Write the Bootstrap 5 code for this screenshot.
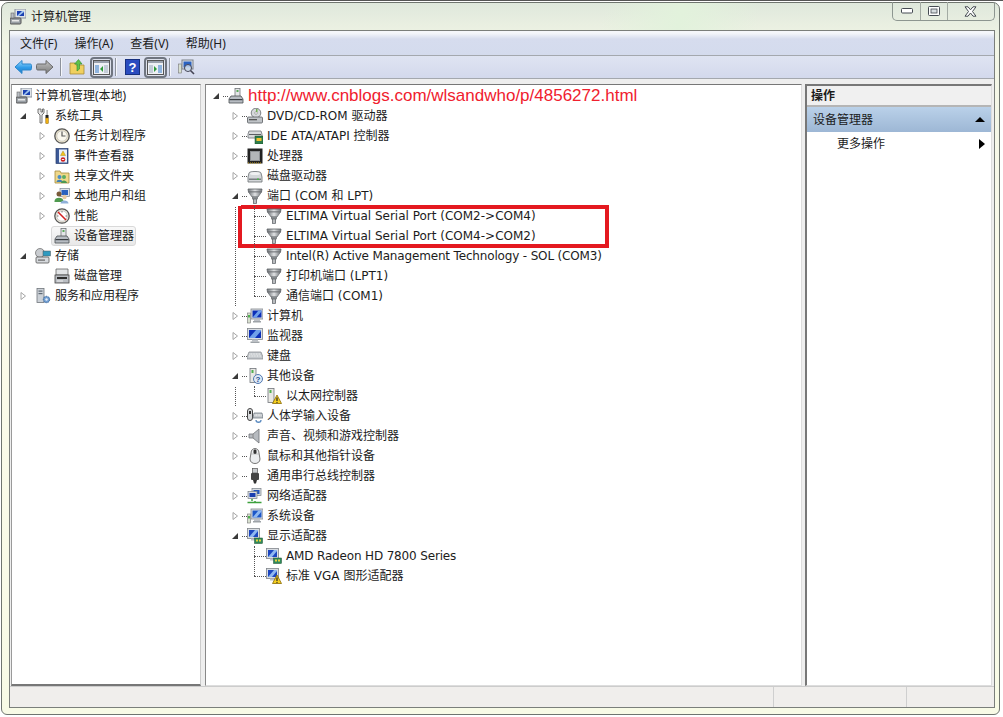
<!DOCTYPE html>
<html lang="zh">
<head>
<meta charset="utf-8">
<title>计算机管理</title>
<link href="https://cdn.jsdelivr.net/npm/bootstrap@5.3.0/dist/css/bootstrap.min.css" rel="stylesheet">
<style>
html,body{height:717px;overflow:hidden;background:#fff;}
body{font-family:"Noto Sans","Noto Sans CJK SC",sans-serif;font-size:12px;line-height:20px;color:#1c1c1c;}
.defs{display:block;width:0;height:0;}
.desk{height:717px;padding:1px 3px 2px 1px;border-top:1px solid #555;}
.frame{height:100%;border:1px solid #6f756f;border-radius:7px 7px 6px 6px;padding:0 4px 6px 7px;background:linear-gradient(180deg,#dfe8dc 0,#f3f6e6 6%,#fbfbea 40%,#f8fbe6 100%);}
.capbar{height:27px;background:linear-gradient(100deg,transparent 0,transparent 60%,#e2f2dc 68%,transparent 76%);}
.capt{padding-left:1px;gap:5px;padding-top:4px;}
.wbtns{height:19px;width:103px;margin-top:-1px;border:1px solid #8d9690;border-top:0;border-radius:0 0 5px 5px;}
.wb{border-left:1px solid #a3aba3;height:100%;}
.wb:first-child{border-left:0;}
.wb1{width:28px}.wb2{width:27px}.wb3{width:48px}
.client{border:1px solid #7b7f7b;background:#eee;height:calc(100% - 27px);}
.menubar{height:25px;padding:2px 0 0 10px;background:linear-gradient(#f5f7fb 0,#f5f7fb 2px,#d6dcee 8px,#d4dbed 100%);border-bottom:1px solid #a4a8ae;gap:17px;}
.mi{white-space:nowrap;}
.toolsbar{height:23px;padding-left:4px;background:linear-gradient(#dfe4f2,#d3d9ec);border-bottom:1px solid #a4a8ae;}
.tsep{width:1px;height:18px;background:#8d929c;box-shadow:1px 0 0 #f4f6fb;}
.tbn{width:23px;height:21px;border:2px solid #6f7580;border-radius:4px;background:#dde1ec;}
.t2{margin-left:2px}.t4{margin-left:4px}.t5{margin-left:5px}.t6{margin-left:6px}.t8{margin-left:8px}.t9{margin-left:9px}
.panes{min-height:0;padding:5px 2px 0 1px;gap:4px;background:#eeeeee;}
.pane{background:#fff;border:1px solid #9a9a9a;overflow:hidden;}
.pl{width:190px;flex:none;border-top-color:#777;border-right-color:#ccc;border-bottom:2px solid #777;}
.pm{width:597px;flex:none;border-top-color:#777;border-left-color:#888;border-right-color:#ddd;border-bottom-color:#ddd;}
.pr{flex:1 1 auto;margin-left:-1px;border-left:2px solid #777;border-top:2px solid #777;border-bottom-color:#ddd;border-right-color:#ddd;}
.stbar{height:21px;flex:none;background:#f0eeec;border-top:1px solid #ccc;}
.scell{border-left:1px solid #cfcfcf;height:100%;}
.sc1{width:133px}.sc2{width:88px}
.nd{height:20px;white-space:nowrap;position:relative;}
.xp{width:11px;height:20px;flex:none;display:flex;align-items:center;justify-content:center;position:relative;z-index:1;}
.ic{width:16px;height:16px;flex:none;margin:0 2px 0 6px;position:relative;z-index:1;}
.tx{line-height:20px;padding-left:2px;position:relative;z-index:1;}
.kids{margin-left:19px;position:relative;}
.mid .kids::before{content:"";position:absolute;left:5px;top:0;bottom:10px;border-left:1px dotted #555;}
.mid .kids.tail2::before{bottom:50px;}
.mid .nd::before{content:"";position:absolute;left:5px;top:10px;width:12px;border-top:1px dotted #555;}
.mid .xp:not(:empty){background:#fff;}
.rootnd .ic{margin:0 1px 0 0;}
.pick{position:absolute;left:14px;top:0;width:85px;height:20px;border:1px solid #d9d9d9;border-radius:3px;background:linear-gradient(#f8f8f8,#e8e8e8);}
.lft{padding:1px 0 0 6px;}
.rootnd{margin-left:-2px;}
.mid{padding:1px 0 0 5px;position:relative;}
.url{color:#f0202e;font-size:17px;font-family:"Liberation Sans",sans-serif;}
.lat{font-family:"DejaVu Sans",sans-serif;font-size:12px;}
.nar1{letter-spacing:-.16px;}
.nar2{letter-spacing:-.16px;}
.bx{position:absolute;left:32px;top:120px;width:371px;height:43px;border:4px solid #e41920;}
.acth{height:21px;background:#f0f0f0;border-bottom:2px solid #b5b5b5;padding-left:4px;font-weight:700;line-height:20px;}
.actg{height:25px;padding:0 6px 0 6px;background:linear-gradient(#bad1e9,#9db7d5);}
.acti{height:24px;padding:0 6px 0 30px;}
.up3{width:0;height:0;border:5px solid transparent;border-top:0;border-bottom:5px solid #000;}
.rt3{width:0;height:0;border:5px solid transparent;border-right:0;border-left:6px solid #000;}
</style>
</head>
<body>
<svg class="defs" xmlns="http://www.w3.org/2000/svg">
<defs>
<linearGradient id="gb" x1="0" y1="0" x2="0" y2="1"><stop offset="0" stop-color="#9fdcff"/><stop offset=".55" stop-color="#2f9be8"/><stop offset="1" stop-color="#1f7cc8"/></linearGradient>
<linearGradient id="gg" x1="0" y1="0" x2="0" y2="1"><stop offset="0" stop-color="#c4c4c4"/><stop offset="1" stop-color="#7a7a7a"/></linearGradient>
<linearGradient id="gp" x1="0" y1="0" x2="1" y2="0"><stop offset="0" stop-color="#70757a"/><stop offset=".5" stop-color="#dfe1e3"/><stop offset="1" stop-color="#70757a"/></linearGradient>
<symbol id="op" viewBox="0 0 11 20"><path d="M3 6.500v7l4.500-3.500z" fill="#fff" stroke="#a6a6a6"/></symbol>
<symbol id="cl" viewBox="0 0 11 20"><path d="M8 7v6H2z" fill="#3a3a3a"/></symbol>
<symbol id="mgmt" viewBox="0 0 16 16"><rect x="5" y="0" width="11" height="9" fill="#dfe3e8" stroke="#8a929c"/><rect x="7" y="2" width="7" height="5" fill="#1a3fb0"/><path d="M7 7l5-5h2v1L9 7z" fill="#9fc3ee"/><rect x="0" y="9" width="11" height="6" rx="1" fill="#9aa0a6" stroke="#555"/><rect x="2" y="11" width="7" height="1.500" fill="#e8e8e8"/><rect x="1" y="4" width="3" height="5" fill="#b9bec4" stroke="#666" stroke-width=".6"/></symbol>
<symbol id="tools" viewBox="0 0 16 16"><path d="M3 1v4l2 2v8h2V7l2-2V1L7.500 1v3h-1.500V1z" fill="#e8e8e8" stroke="#666" stroke-width=".9"/><rect x="10.500" y="7" width="3" height="3" fill="#222"/><rect x="10.800" y="10" width="2.500" height="5.500" fill="#f0b010" stroke="#8a6000" stroke-width=".5"/><rect x="11.500" y="2" width="1.200" height="5" fill="#999"/></symbol>
<symbol id="clock" viewBox="0 0 16 16"><circle cx="8" cy="8" r="7.200" fill="#ece4cc" stroke="#555" stroke-width="1.300"/><circle cx="8" cy="8" r="5.200" fill="#fbf8ee" stroke="#aaa" stroke-width=".5"/><path d="M8 3.500V8h3.500" fill="none" stroke="#5a5a5a" stroke-width="1.200"/></symbol>
<symbol id="event" viewBox="0 0 16 16"><rect x="2" y="0.500" width="12" height="15" fill="#3c5a98" stroke="#263c6c" stroke-width=".7"/><rect x="5" y="1.500" width="8" height="13" fill="#e8eef8"/><path d="M9 3l2.500 4.500h-5z" fill="#f2c21a" stroke="#9a7a10" stroke-width=".4"/><circle cx="9" cy="11.500" r="2.300" fill="#d02020"/><rect x="7.800" y="11" width="2.400" height=".9" fill="#fff"/></symbol>
<symbol id="share" viewBox="0 0 16 16"><path d="M1 3h5l1 2h8v10H1z" fill="#efd88a" stroke="#a58a3a" stroke-width=".8"/><circle cx="5.500" cy="9" r="2" fill="#4a8ec8"/><path d="M2.500 14c0-3 6-3 6 0z" fill="#3f7fb5"/><circle cx="10" cy="9" r="2" fill="#5bae62"/><path d="M7 15c0-3.500 6-3.500 6 0z" fill="#4c9a52"/></symbol>
<symbol id="users" viewBox="0 0 16 16"><rect x="6" y="0.500" width="9.500" height="8" fill="#dde2ea" stroke="#7f8894" stroke-width=".7"/><rect x="7.500" y="2" width="6.500" height="5" fill="#2a62c0"/><circle cx="5" cy="6" r="2.500" fill="#7a5a3a"/><path d="M0.500 13c0-4.500 9-4.500 9 0v1h-9z" fill="#4f9a4f"/><circle cx="10.500" cy="9" r="2.200" fill="#e8c9a0"/><path d="M6.500 15.500c0-4 8-4 8 0z" fill="#8fb0d8"/></symbol>
<symbol id="perf" viewBox="0 0 16 16"><circle cx="8" cy="8" r="7.200" fill="#e9e5d8" stroke="#555" stroke-width="1.300"/><circle cx="8" cy="8" r="5.200" fill="#fff" stroke="#aaa" stroke-width=".5"/><path d="M4 4l8 8" stroke="#d02020" stroke-width="1.600"/><path d="M8 3v1.500M3 8h1.500M11.500 8H13" stroke="#555" stroke-width=".8"/></symbol>
<symbol id="dev" viewBox="0 0 16 16"><rect x="7" y="0.500" width="5" height="8" fill="#e4e6e8" stroke="#707478" stroke-width=".8"/><rect x="8.500" y="2" width="2" height="2" fill="#5aa85a"/><path d="M3 8h10l2 3v4H1v-4z" fill="#b7bcc2" stroke="#4a4e52" stroke-width=".8"/><rect x="1.500" y="11" width="13" height="1.200" fill="#3a3e42"/></symbol>
<symbol id="store" viewBox="0 0 16 16"><circle cx="5" cy="5" r="4.500" fill="#c9ccd0" stroke="#666" stroke-width=".7"/><rect x="1" y="9" width="13" height="6" rx="1" fill="#d6d9dd" stroke="#555" stroke-width=".8"/><rect x="8" y="3" width="7.500" height="5" fill="#2f9ac0" stroke="#555" stroke-width=".5"/><rect x="3" y="11.500" width="7" height="1.200" fill="#666"/></symbol>
<symbol id="dmg" viewBox="0 0 16 16"><path d="M2 1h12v6H2z" fill="#e2e4e6" stroke="#666" stroke-width=".8"/><rect x="1" y="7" width="14" height="8" fill="#b9bdc2" stroke="#444" stroke-width=".8"/><rect x="3" y="9" width="10" height="2" fill="#2d2d2d"/><rect x="3" y="12.500" width="6" height="1" fill="#eee"/></symbol>
<symbol id="svc" viewBox="0 0 16 16"><rect x="2" y="0.500" width="7" height="14" fill="#ccd1d7" stroke="#70767c" stroke-width=".8"/><rect x="3.500" y="2.500" width="4" height="1.200" fill="#5f6a75"/><rect x="3.500" y="5" width="4" height="1.200" fill="#5f6a75"/><circle cx="11.500" cy="11.500" r="3.200" fill="#6f9cd0" stroke="#3f6a9c" stroke-dasharray="1.500 .8"/><circle cx="11.500" cy="11.500" r="1.200" fill="#e8f0fa"/></symbol>
<symbol id="dvd" viewBox="0 0 16 16"><circle cx="9" cy="5" r="4.800" fill="#d6d9dc" stroke="#7d8185"/><circle cx="9" cy="5" r="1.300" fill="#fff" stroke="#6a6a6a" stroke-width=".5"/><rect x="9" y="1" width="1.500" height="3" fill="#70b050"/><rect x="0.500" y="9" width="15" height="6" rx="1" fill="#bfc3c7" stroke="#585c60" stroke-width=".8"/><rect x="2" y="11" width="8" height="1.300" fill="#555"/></symbol>
<symbol id="ide" viewBox="0 0 16 16"><path d="M2 3h12l1 3v4H1V6z" fill="#d8dadc" stroke="#70747a" stroke-width=".8"/><rect x="2" y="6" width="12" height="1" fill="#5a5e62"/><rect x="8" y="8" width="8" height="8" fill="#2e7d4a" stroke="#1c4d2d" stroke-width=".5"/><rect x="9.500" y="10" width="5" height="3" fill="#f0c030"/></symbol>
<symbol id="cpu" viewBox="0 0 16 16"><rect x="0.500" y="0.500" width="15" height="15" fill="#222"/><rect x="3" y="3" width="10" height="10" fill="#8f9296"/><rect x="4" y="4" width="8" height="8" fill="#b3b6b9"/><path d="M1 15h14" stroke="#c8a020" stroke-dasharray="1 1" stroke-width="1"/></symbol>
<symbol id="hdd" viewBox="0 0 16 16"><path d="M2 5c0-2 12-2 12 0l1 4v5H1V9z" fill="#d4d7da" stroke="#6a6e72" stroke-width=".8"/><ellipse cx="8" cy="5.500" rx="5" ry="1.600" fill="#f0f1f2"/><rect x="2" y="10.500" width="12" height="1.500" fill="#7a7e82"/><rect x="10" y="10.500" width="2" height="1.500" fill="#50b050"/></symbol>
<symbol id="port" viewBox="0 0 16 16"><path d="M1 1h14l-.5 3h-13z" fill="url(#gp)" stroke="#5e6266" stroke-width=".8"/><path d="M1.500 4h13L11 9H5z" fill="url(#gp)" stroke="#6e7276" stroke-width=".8"/><rect x="5.500" y="9" width="5" height="2" fill="#989ca0" stroke="#606468" stroke-width=".6"/><rect x="6.500" y="11" width="3" height="4.500" fill="url(#gp)" stroke="#606468" stroke-width=".7"/></symbol>
<symbol id="pc" viewBox="0 0 16 16"><rect x="4" y="1" width="12" height="10" fill="#d9dde2" stroke="#80868c" stroke-width=".8"/><rect x="5.500" y="2.500" width="9" height="7" fill="#0c2fb8"/><path d="M5.500 9.500l6-7h3v1l-5 6z" fill="#6fa0ea"/><rect x="7" y="11" width="6" height="2" fill="#bcc0c6"/><rect x="6" y="13" width="8" height="1.500" fill="#9ea3a8"/><rect x="0.500" y="5" width="3" height="10" fill="#d8e0d0" stroke="#777" stroke-width=".6"/><rect x="1" y="7" width="2" height="2.500" fill="#50b050"/></symbol>
<symbol id="mon" viewBox="0 0 16 16"><rect x="0.500" y="0.500" width="15" height="11" fill="#d9dde2" stroke="#80868c" stroke-width=".8"/><rect x="2" y="2" width="12" height="8" fill="#0c2fb8"/><path d="M2 10l7-8h5v1l-6 7z" fill="#6fa0ea"/><rect x="5" y="11.500" width="6" height="2" fill="#bcc0c6"/><rect x="3.500" y="13.500" width="9" height="1.500" fill="#9ea3a8"/></symbol>
<symbol id="kbd" viewBox="0 0 16 16"><path d="M2 4h12l2 5v2H0V9z" fill="#c4c8cc" stroke="#7e8286" stroke-width=".7"/><path d="M2.500 6h11M2 8h12" stroke="#f5f5f5" stroke-width="1.100" stroke-dasharray="1 .6"/></symbol>
<symbol id="unk" viewBox="0 0 16 16"><rect x="3" y="0.500" width="6" height="14" fill="#e8e8e4" stroke="#70747a" stroke-width=".8"/><rect x="4.500" y="2" width="2" height="3" fill="#50b050"/><circle cx="11" cy="11" r="4.500" fill="#dfe9f6" stroke="#5078b0"/><text x="11" y="14" font-size="8" font-weight="700" text-anchor="middle" fill="#204a90" font-family="Liberation Sans">?</text></symbol>
<symbol id="wrn" viewBox="0 0 16 16"><rect x="2" y="0.500" width="6" height="14" fill="#e8e8e4" stroke="#70747a" stroke-width=".8"/><rect x="3.500" y="2" width="2" height="3" fill="#50b050"/><path d="M11 7l4.500 8.500h-9z" fill="#f6d020" stroke="#8a6a00" stroke-width=".8"/><path d="M11 9.500v3.500" stroke="#222" stroke-width="1.200"/><circle cx="11" cy="14.400" r=".6" fill="#222"/></symbol>
<symbol id="hid" viewBox="0 0 16 16"><rect x="0.500" y="0.500" width="5" height="12" rx="2.500" fill="#d8dadc" stroke="#444"/><rect x="2" y="3" width="2" height="3" fill="#333"/><path d="M7 5h8l1 5H6z" fill="#c4c8cc" stroke="#66707a" stroke-width=".7"/><path d="M7.500 7h7" stroke="#fff" stroke-dasharray="1 .6"/><path d="M9 12c0 3 5 3 5 0" fill="none" stroke="#5a8ac0" stroke-width="1.300"/></symbol>
<symbol id="spk" viewBox="0 0 16 16"><path d="M2 6h4l6-5v14l-6-5H2z" fill="#b7bbc0" stroke="#6e7276" stroke-width=".8"/><path d="M6 6v4" stroke="#888"/></symbol>
<symbol id="mouse" viewBox="0 0 16 16"><path d="M4 5c0-6 8-6 8 0l1 6c0 6-10 6-10 0z" fill="#eceef0" stroke="#555" stroke-width=".8"/><rect x="6.500" y="1.500" width="3" height="4.500" rx="1.200" fill="#333"/><path d="M4 6h8" stroke="#999" stroke-width=".5"/></symbol>
<symbol id="usb" viewBox="0 0 16 16"><rect x="5.500" y="0.500" width="5" height="4.500" fill="#c9cccf" stroke="#555" stroke-width=".7"/><rect x="4" y="5" width="8" height="7" rx="1" fill="#444"/><path d="M6 12h4l-1 3.500H7z" fill="#333"/></symbol>
<symbol id="net" viewBox="0 0 16 16"><rect x="5" y="0.500" width="9" height="7" fill="#d9dde2" stroke="#7a8088" stroke-width=".7"/><rect x="6.500" y="2" width="6" height="4" fill="#2356c0"/><rect x="1" y="3.500" width="9" height="7" fill="#d9dde2" stroke="#7a8088" stroke-width=".7"/><rect x="2.500" y="5" width="6" height="4" fill="#1a3fb0"/><path d="M5 11v2M0.500 14.500h14M8 13v1.500" stroke="#3ca03c" stroke-width="1.500"/></symbol>
<symbol id="sys" viewBox="0 0 16 16"><rect x="4" y="1" width="12" height="10" fill="#d9dde2" stroke="#80868c" stroke-width=".8"/><rect x="5.500" y="2.500" width="9" height="7" fill="#1c56c8"/><path d="M5.500 9.500l6-7h3v1l-5 6z" fill="#8fb8f0"/><rect x="7" y="11" width="6" height="2" fill="#bcc0c6"/><rect x="6" y="13" width="8" height="1.500" fill="#9ea3a8"/><rect x="0.500" y="6" width="3" height="9" fill="#d8e0d0" stroke="#777" stroke-width=".6"/><rect x="1" y="8" width="2" height="2.500" fill="#50b050"/></symbol>
<symbol id="disp" viewBox="0 0 16 16"><rect x="0.500" y="0.500" width="12" height="10" fill="#d9dde2" stroke="#80868c" stroke-width=".8"/><rect x="2" y="2" width="9" height="7" fill="#1c46c0"/><path d="M2 9l6-7h3v1L6 9z" fill="#8fb8f0"/><rect x="4" y="10.500" width="5" height="2" fill="#bcc0c6"/><rect x="7.500" y="10" width="8" height="5.500" fill="#2e8a5a" stroke="#1c4d2d" stroke-width=".5"/><rect x="9" y="11.500" width="2" height="2" fill="#e8d040"/><rect x="12" y="11.500" width="2" height="2" fill="#e8d040"/></symbol>
<symbol id="dispw" viewBox="0 0 16 16"><rect x="0.500" y="0.500" width="12" height="10" fill="#d9dde2" stroke="#80868c" stroke-width=".8"/><rect x="2" y="2" width="9" height="7" fill="#1c46c0"/><path d="M2 9l6-7h3v1L6 9z" fill="#8fb8f0"/><rect x="4" y="10.500" width="5" height="2" fill="#bcc0c6"/><path d="M11 7l4.500 8.500h-9z" fill="#f6d020" stroke="#8a6a00" stroke-width=".8"/><path d="M11 9.500v3.500" stroke="#222" stroke-width="1.200"/><circle cx="11" cy="14.400" r=".6" fill="#222"/></symbol>
</defs>
</svg>

<div class="desk">
<div class="frame">
  <div class="capbar d-flex justify-content-between align-items-start">
    <div class="capt d-flex align-items-center"><svg class="ic m-0" viewBox="0 0 16 16"><use href="#mgmt"/></svg><span>计算机管理</span></div>
    <div class="wbtns d-flex">
      <div class="wb wb1 d-flex align-items-center justify-content-center"><svg width="12" height="6" viewBox="0 0 12 6"><rect x=".5" y=".5" width="11" height="4.500" rx="1" fill="#fff" stroke="#454b52"/></svg></div>
      <div class="wb wb2 d-flex align-items-center justify-content-center"><svg width="12" height="10" viewBox="0 0 12 10"><rect x=".5" y=".5" width="11" height="9" rx="1" fill="#fff" stroke="#454b52"/><rect x="3" y="3" width="6" height="4" fill="#d7dde0" stroke="#454b52" stroke-width=".8"/></svg></div>
      <div class="wb wb3 d-flex align-items-center justify-content-center"><svg width="13" height="11" viewBox="0 0 13 11"><path d="M1 .8h3l2.500 3 2.500-3h3L8.500 5.500l3.500 4.700H9L6.500 7 4 10.200H1l3.500-4.700z" fill="#fff" stroke="#454b52"/></svg></div>
    </div>
  </div>
  <div class="client d-flex flex-column">
    <div class="menubar d-flex align-items-center">
      <span class="mi">文件(F)</span><span class="mi">操作(A)</span><span class="mi">查看(V)</span><span class="mi">帮助(H)</span>
    </div>
    <div class="toolsbar d-flex align-items-center">
      <svg width="18" height="16" viewBox="0 0 18 16"><path d="M1 8l7-6.500v3.500h8c1 0 1.500.5 1.500 1.500v3c0 1-.5 1.500-1.500 1.500H8v3.500z" fill="url(#gb)" stroke="#2a86cc"/></svg>
      <svg width="18" height="16" viewBox="0 0 18 16" class="t4"><path d="M17 8l-7-6.500v3.500H2C1 5 .5 5.500.5 6.500v3c0 1 .5 1.500 1.500 1.500h8v3.500z" fill="url(#gg)" stroke="#6a6a6a"/></svg>
      <div class="tsep t6"></div>
      <svg width="16" height="16" viewBox="0 0 16 16" class="t8"><path d="M1 4h5l1 2h8v9H1z" fill="#f0d060" stroke="#a58a3a" stroke-width=".8"/><path d="M8 12V5H5.500L9.500 .5 13 5h-2.500v5z" fill="#5fc24a" stroke="#2f8a2a" stroke-width=".6"/></svg>
      <div class="tbn t5 d-flex align-items-center justify-content-center"><svg width="17" height="15" viewBox="0 0 17 15"><rect x=".5" y=".5" width="16" height="14" fill="#eef0f4" stroke="#555"/><rect x="1" y="1" width="15" height="2" fill="#99a0ac"/><rect x="2" y="5" width="4" height="8" fill="#8fb4de"/><rect x="11" y="5" width="4" height="8" fill="#c4ccd8"/><path d="M10 6v6L7 9z" fill="#2f9a3a"/></svg></div>
      <div class="tsep t2"></div>
      <svg width="15" height="16" viewBox="0 0 15 16" class="t9"><rect x=".5" y=".5" width="14" height="15" fill="#2a4cc0" stroke="#17307f"/><text x="7.500" y="13" font-size="13" font-weight="700" fill="#fff" text-anchor="middle" font-family="Liberation Sans">?</text></svg>
      <div class="tbn t4 d-flex align-items-center justify-content-center"><svg width="17" height="15" viewBox="0 0 17 15"><rect x=".5" y=".5" width="16" height="14" fill="#eef0f4" stroke="#555"/><rect x="1" y="1" width="15" height="2" fill="#99a0ac"/><rect x="2" y="5" width="4" height="8" fill="#c4ccd8"/><rect x="11" y="5" width="4" height="8" fill="#8fb4de"/><path d="M7 6v6l3-3z" fill="#2f9a3a"/></svg></div>
      <div class="tsep t2"></div>
      <svg width="17" height="16" viewBox="0 0 17 16" class="t8"><rect x="4" y="1" width="11" height="9" fill="#dfe3e8" stroke="#7a8088"/><rect x="5.500" y="2.500" width="8" height="6" fill="#2a62c0"/><rect x="0.500" y="5" width="3" height="9" fill="#d8e0d0" stroke="#777" stroke-width=".6"/><circle cx="10" cy="9" r="3.500" fill="#cfe0f0" fill-opacity=".8" stroke="#445"/><path d="M12.500 11.500l3.500 3.500" stroke="#445" stroke-width="1.600"/></svg>
    </div>
    <div class="panes d-flex flex-grow-1">
      <div class="pane pl">
        <div class="lft">
          <div class="nd rootnd d-flex align-items-center"><svg class="ic" viewBox="0 0 16 16"><use href="#mgmt"/></svg><span class="tx">计算机管理(本地)</span></div>
          <div>
            <div class="nd d-flex align-items-center"><span class="xp"><svg width="11" height="20"><use href="#cl"/></svg></span><svg class="ic" viewBox="0 0 16 16"><use href="#tools"/></svg><span class="tx">系统工具</span></div>
            <div class="kids">
              <div class="nd d-flex align-items-center"><span class="xp"><svg width="11" height="20"><use href="#op"/></svg></span><svg class="ic" viewBox="0 0 16 16"><use href="#clock"/></svg><span class="tx">任务计划程序</span></div>
              <div class="nd d-flex align-items-center"><span class="xp"><svg width="11" height="20"><use href="#op"/></svg></span><svg class="ic" viewBox="0 0 16 16"><use href="#event"/></svg><span class="tx">事件查看器</span></div>
              <div class="nd d-flex align-items-center"><span class="xp"><svg width="11" height="20"><use href="#op"/></svg></span><svg class="ic" viewBox="0 0 16 16"><use href="#share"/></svg><span class="tx">共享文件夹</span></div>
              <div class="nd d-flex align-items-center"><span class="xp"><svg width="11" height="20"><use href="#op"/></svg></span><svg class="ic" viewBox="0 0 16 16"><use href="#users"/></svg><span class="tx">本地用户和组</span></div>
              <div class="nd d-flex align-items-center"><span class="xp"><svg width="11" height="20"><use href="#op"/></svg></span><svg class="ic" viewBox="0 0 16 16"><use href="#perf"/></svg><span class="tx">性能</span></div>
              <div class="nd d-flex align-items-center"><span class="pick"></span><span class="xp"></span><svg class="ic" viewBox="0 0 16 16"><use href="#dev"/></svg><span class="tx">设备管理器</span></div>
            </div>
            <div class="nd d-flex align-items-center"><span class="xp"><svg width="11" height="20"><use href="#cl"/></svg></span><svg class="ic" viewBox="0 0 16 16"><use href="#store"/></svg><span class="tx">存储</span></div>
            <div class="kids">
              <div class="nd d-flex align-items-center"><span class="xp"></span><svg class="ic" viewBox="0 0 16 16"><use href="#dmg"/></svg><span class="tx">磁盘管理</span></div>
            </div>
            <div class="nd d-flex align-items-center"><span class="xp"><svg width="11" height="20"><use href="#op"/></svg></span><svg class="ic" viewBox="0 0 16 16"><use href="#svc"/></svg><span class="tx">服务和应用程序</span></div>
          </div>
        </div>
      </div>
      <div class="pane pm">
        <div class="mid">
          <div class="bx"></div>
          <div class="nd d-flex align-items-center"><span class="xp"><svg width="11" height="20"><use href="#cl"/></svg></span><svg class="ic" viewBox="0 0 16 16"><use href="#dev"/></svg><span class="tx url">http://www.cnblogs.com/wlsandwho/p/4856272.html</span></div>
          <div class="kids tail2">
            <div class="nd d-flex align-items-center"><span class="xp"><svg width="11" height="20"><use href="#op"/></svg></span><svg class="ic" viewBox="0 0 16 16"><use href="#dvd"/></svg><span class="tx"><span class="lat">DVD/CD-ROM </span>驱动器</span></div>
            <div class="nd d-flex align-items-center"><span class="xp"><svg width="11" height="20"><use href="#op"/></svg></span><svg class="ic" viewBox="0 0 16 16"><use href="#ide"/></svg><span class="tx"><span class="lat">IDE ATA/ATAPI </span>控制器</span></div>
            <div class="nd d-flex align-items-center"><span class="xp"><svg width="11" height="20"><use href="#op"/></svg></span><svg class="ic" viewBox="0 0 16 16"><use href="#cpu"/></svg><span class="tx">处理器</span></div>
            <div class="nd d-flex align-items-center"><span class="xp"><svg width="11" height="20"><use href="#op"/></svg></span><svg class="ic" viewBox="0 0 16 16"><use href="#hdd"/></svg><span class="tx">磁盘驱动器</span></div>
            <div class="nd d-flex align-items-center"><span class="xp"><svg width="11" height="20"><use href="#cl"/></svg></span><svg class="ic" viewBox="0 0 16 16"><use href="#port"/></svg><span class="tx">端口<span class="lat"> (COM </span>和<span class="lat"> LPT)</span></span></div>
            <div class="kids">
              <div class="nd d-flex align-items-center"><span class="xp"></span><svg class="ic" viewBox="0 0 16 16"><use href="#port"/></svg><span class="tx lat">ELTIMA Virtual Serial Port (COM2-&gt;COM4)</span></div>
              <div class="nd d-flex align-items-center"><span class="xp"></span><svg class="ic" viewBox="0 0 16 16"><use href="#port"/></svg><span class="tx lat">ELTIMA Virtual Serial Port (COM4-&gt;COM2)</span></div>
              <div class="nd d-flex align-items-center"><span class="xp"></span><svg class="ic" viewBox="0 0 16 16"><use href="#port"/></svg><span class="tx lat nar1">Intel(R) Active Management Technology - SOL (COM3)</span></div>
              <div class="nd d-flex align-items-center"><span class="xp"></span><svg class="ic" viewBox="0 0 16 16"><use href="#port"/></svg><span class="tx">打印机端口<span class="lat"> (LPT1)</span></span></div>
              <div class="nd d-flex align-items-center"><span class="xp"></span><svg class="ic" viewBox="0 0 16 16"><use href="#port"/></svg><span class="tx">通信端口<span class="lat"> (COM1)</span></span></div>
            </div>
            <div class="nd d-flex align-items-center"><span class="xp"><svg width="11" height="20"><use href="#op"/></svg></span><svg class="ic" viewBox="0 0 16 16"><use href="#pc"/></svg><span class="tx">计算机</span></div>
            <div class="nd d-flex align-items-center"><span class="xp"><svg width="11" height="20"><use href="#op"/></svg></span><svg class="ic" viewBox="0 0 16 16"><use href="#mon"/></svg><span class="tx">监视器</span></div>
            <div class="nd d-flex align-items-center"><span class="xp"><svg width="11" height="20"><use href="#op"/></svg></span><svg class="ic" viewBox="0 0 16 16"><use href="#kbd"/></svg><span class="tx">键盘</span></div>
            <div class="nd d-flex align-items-center"><span class="xp"><svg width="11" height="20"><use href="#cl"/></svg></span><svg class="ic" viewBox="0 0 16 16"><use href="#unk"/></svg><span class="tx">其他设备</span></div>
            <div class="kids">
              <div class="nd d-flex align-items-center"><span class="xp"></span><svg class="ic" viewBox="0 0 16 16"><use href="#wrn"/></svg><span class="tx">以太网控制器</span></div>
            </div>
            <div class="nd d-flex align-items-center"><span class="xp"><svg width="11" height="20"><use href="#op"/></svg></span><svg class="ic" viewBox="0 0 16 16"><use href="#hid"/></svg><span class="tx">人体学输入设备</span></div>
            <div class="nd d-flex align-items-center"><span class="xp"><svg width="11" height="20"><use href="#op"/></svg></span><svg class="ic" viewBox="0 0 16 16"><use href="#spk"/></svg><span class="tx">声音、视频和游戏控制器</span></div>
            <div class="nd d-flex align-items-center"><span class="xp"><svg width="11" height="20"><use href="#op"/></svg></span><svg class="ic" viewBox="0 0 16 16"><use href="#mouse"/></svg><span class="tx">鼠标和其他指针设备</span></div>
            <div class="nd d-flex align-items-center"><span class="xp"><svg width="11" height="20"><use href="#op"/></svg></span><svg class="ic" viewBox="0 0 16 16"><use href="#usb"/></svg><span class="tx">通用串行总线控制器</span></div>
            <div class="nd d-flex align-items-center"><span class="xp"><svg width="11" height="20"><use href="#op"/></svg></span><svg class="ic" viewBox="0 0 16 16"><use href="#net"/></svg><span class="tx">网络适配器</span></div>
            <div class="nd d-flex align-items-center"><span class="xp"><svg width="11" height="20"><use href="#op"/></svg></span><svg class="ic" viewBox="0 0 16 16"><use href="#sys"/></svg><span class="tx">系统设备</span></div>
            <div class="nd d-flex align-items-center"><span class="xp"><svg width="11" height="20"><use href="#cl"/></svg></span><svg class="ic" viewBox="0 0 16 16"><use href="#disp"/></svg><span class="tx">显示适配器</span></div>
            <div class="kids">
              <div class="nd d-flex align-items-center"><span class="xp"></span><svg class="ic" viewBox="0 0 16 16"><use href="#disp"/></svg><span class="tx lat nar2">AMD Radeon HD 7800 Series</span></div>
              <div class="nd d-flex align-items-center"><span class="xp"></span><svg class="ic" viewBox="0 0 16 16"><use href="#dispw"/></svg><span class="tx">标准<span class="lat"> VGA </span>图形适配器</span></div>
            </div>
          </div>
        </div>
      </div>
      <div class="pane pr">
        <div class="acth">操作</div>
        <div class="actg d-flex align-items-center justify-content-between"><span>设备管理器</span><span class="up3"></span></div>
        <div class="acti d-flex align-items-center justify-content-between"><span>更多操作</span><span class="rt3"></span></div>
      </div>
    </div>
    <div class="stbar d-flex justify-content-end">
      <div class="scell sc1"></div><div class="scell sc2"></div>
    </div>
  </div>
</div>
</div>
<script src="https://cdn.jsdelivr.net/npm/bootstrap@5.3.0/dist/js/bootstrap.bundle.min.js"></script>
</body>
</html>
